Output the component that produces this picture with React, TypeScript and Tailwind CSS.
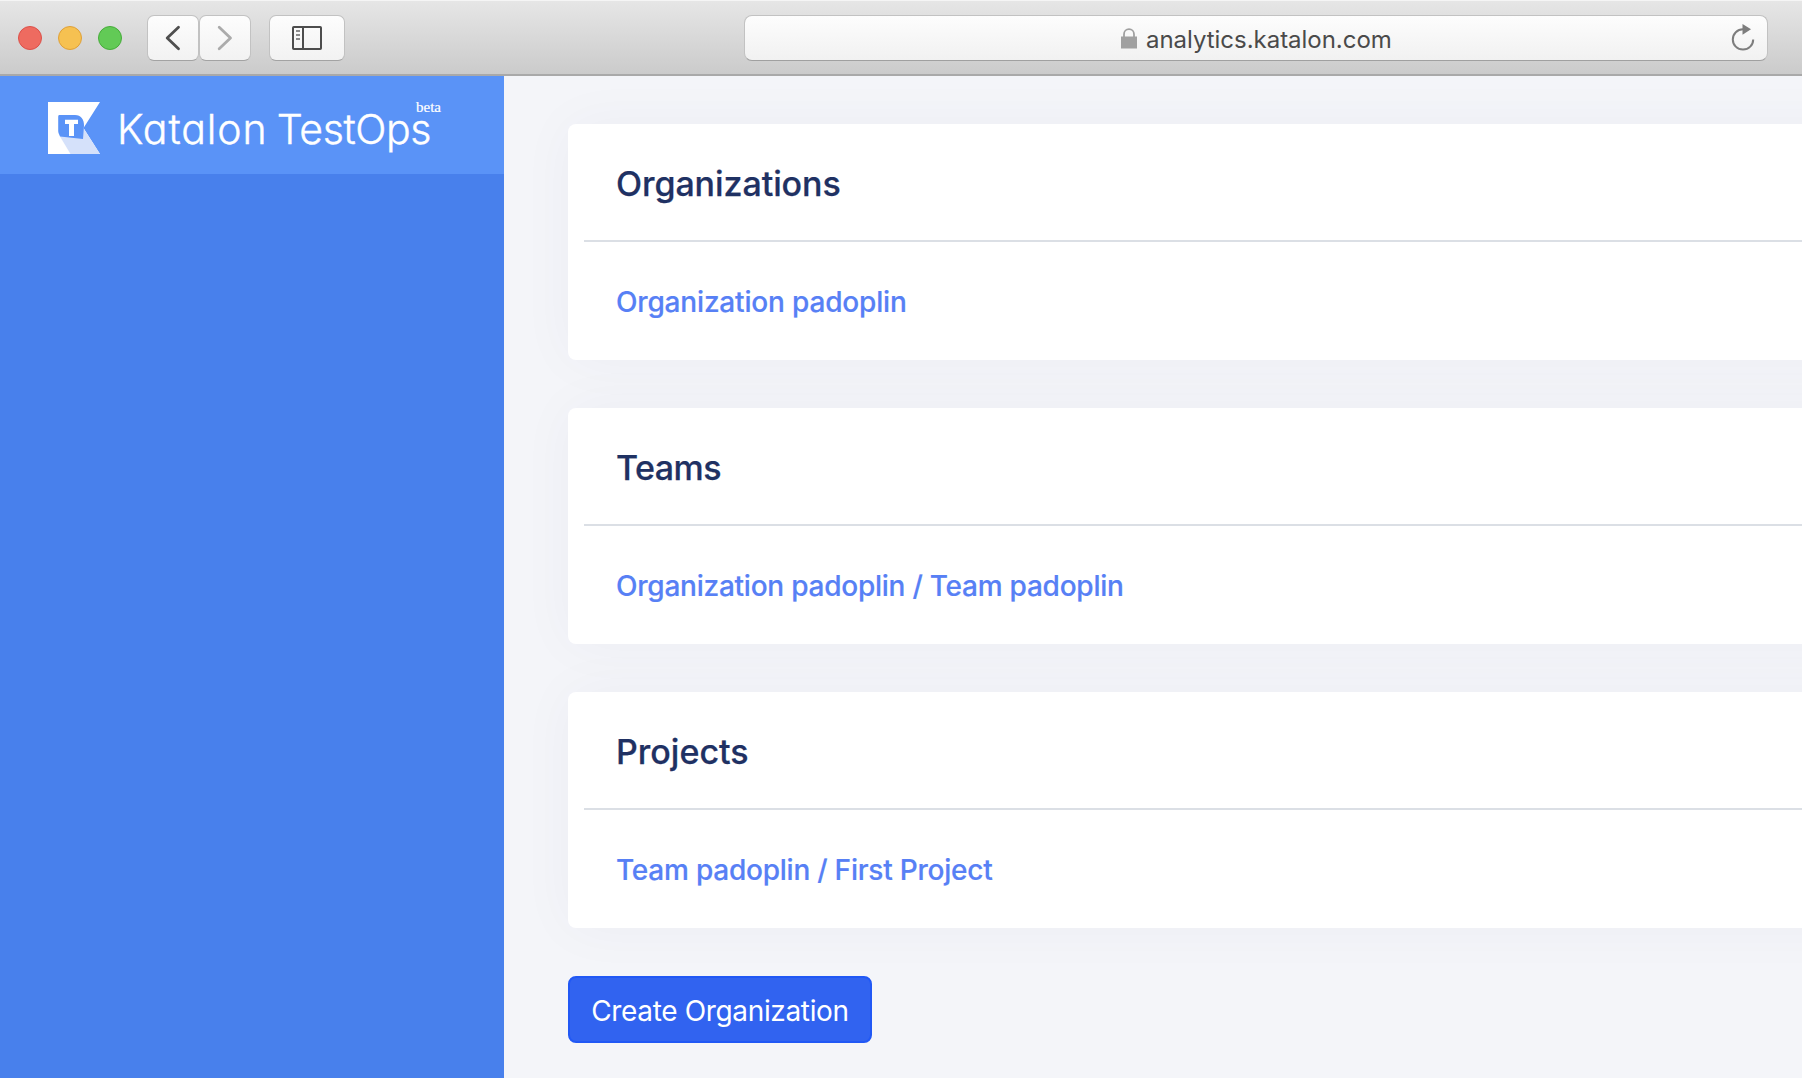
type CardProps = { title: string; titleClass: string; link: string; linkClass: string };

function Card({ title, titleClass, link, linkClass }: CardProps) {
  return (
    <section className="-mr-16 h-[236px] rounded-lg bg-white pl-4 shadow-[0_0_56px_rgba(31,45,90,0.04)]">
      <h2 className={`flex h-[118px] items-center border-b-2 border-[#dbdfe5] pt-[2px] pl-8 text-[34px] font-medium text-[#1f3163] [-webkit-text-stroke:0.25px_#1f3163] ${titleClass}`}>
        {title}
      </h2>
      <div className="flex h-[118px] items-center pt-[2px] pl-8">
        <a href="#" className={`text-[28px] font-medium text-[#5780f5] [-webkit-text-stroke:0.2px_#5780f5] ${linkClass}`}>{link}</a>
      </div>
    </section>
  );
}

const toolButton =
  "flex h-[46px] items-center justify-center rounded-[7px] border border-[#c2c2c2] border-b-[#a3a3a3] bg-gradient-to-b from-[#fdfdfd] to-[#f2f2f2]";

function Toolbar() {
  return (
    <header className="flex h-[76px] shrink-0 items-start border-t border-b-2 border-t-[#f5f5f5] border-b-[#a9a9a9] bg-gradient-to-b from-[#e6e6e6] to-[#cbcbcb] pt-[14px] pl-[18px]">
      <div className="mt-[11px] flex gap-4">
        <span className="size-6 rounded-full border border-[#dc5049] bg-[#ee6b60]" />
        <span className="size-6 rounded-full border border-[#dfa038] bg-[#f6c151]" />
        <span className="size-6 rounded-full border border-[#46ac3a] bg-[#62ca56]" />
      </div>
      <div className="ml-[25px] flex">
        <button className={`${toolButton} w-[52px]`}>
          <svg width="18" height="26" viewBox="0 0 18 26" fill="none" stroke="#4f4f4f" strokeWidth="2.8" strokeLinecap="round" strokeLinejoin="round">
            <path d="M14.5 2.2 3.2 13 14.5 23.8" />
          </svg>
        </button>
        <button className={`${toolButton} w-[52px]`}>
          <svg width="18" height="26" viewBox="0 0 18 26" fill="none" stroke="#ababab" strokeWidth="2.8" strokeLinecap="round" strokeLinejoin="round">
            <path d="M3.2 2.2 14.5 13 3.2 23.8" />
          </svg>
        </button>
      </div>
      <button className={`${toolButton} ml-[18px] w-[76px]`}>
        <svg width="30" height="24" viewBox="0 0 30 24" fill="none" stroke="#4d4d4d" strokeWidth="2">
          <rect x="1" y="1" width="28" height="22" rx="0.8" />
          <path d="M11 1V23" />
          <path d="M4 5H8M4 9H8M4 13H8" stroke="#8c8c8c" />
        </svg>
      </button>
      <div className="ml-[399px] flex h-[46px] w-[1024px] items-center rounded-[8px] border border-[#c2c2c2] border-b-[#a0a0a0] bg-gradient-to-b from-[#fdfdfd] to-[#f1f1f1]">
        <svg className="ml-[376px]" width="16" height="21" viewBox="0 0 16 21" fill="none">
          <rect x="0" y="8.5" width="16" height="12" fill="#a0a0a0" />
          <path d="M3 9V6.2a5 5 0 0 1 10 0V9" stroke="#a0a0a0" strokeWidth="1.8" />
        </svg>
        <span className="ml-[9px] pt-[3px] text-[24px] leading-none tracking-[-0.03px] text-[#4a4a4a]">analytics.katalon.com</span>
        <svg className="mr-3 ml-auto" width="24" height="28" viewBox="0 0 24 28" fill="none">
          <path d="M12 5.2A10.2 10.2 0 1 0 22.2 15.4" stroke="#7d7d7d" strokeWidth="2" />
          <path d="M11.5 0 20 5.3 11.5 10.8Z" fill="#7d7d7d" />
        </svg>
      </div>
    </header>
  );
}

function Brand() {
  return (
    <div className="flex h-[98px] items-start bg-[#5a93f7] pt-[26px] pl-12">
      <svg className="shrink-0" width="52" height="52" viewBox="0 0 52 52">
        <path d="M0 0H52L35.5 26 52 52H0Z" fill="#fff" />
        <path d="M12 34.5 36 27 52 52H22.5Z" fill="#d5e1fa" />
        <path d="M11.5 13H27C33 13 36 17.5 36 23.5L35 37 12 34.5C11 32 10.2 31 10.2 29V15C10.2 13.6 10.6 13 11.5 13Z" fill="#5a93f7" />
        <path d="M17 17.8H30V22H26V34H21V22H17Z" fill="#fff" />
      </svg>
      <div className="flex w-[331px] shrink-0 pt-px pl-[17px] text-[41px] leading-[52px] font-light text-white [-webkit-text-stroke:0.4px_#fff] [font-feature-settings:'cv11']">
        <span className="w-[161px] tracking-[0.9px]">Katalon</span>
        <span className="tracking-[-0.4px]">TestOps</span>
      </div>
      <span className="-ml-[15px] -mt-[2px] font-['Liberation_Serif',serif] text-[15px] leading-[15px] text-white [-webkit-text-stroke:0.2px_#fff]">beta</span>
    </div>
  );
}

export default function App() {
  return (
    <div className="flex h-[1078px] w-[1802px] flex-col overflow-hidden font-['Inter',sans-serif]">
      <Toolbar />
      <div className="flex min-h-0 flex-1">
        <aside className="w-[504px] shrink-0 bg-[#4880ec]">
          <Brand />
        </aside>
        <main className="flex flex-1 flex-col gap-12 overflow-hidden bg-[#f4f5f9] pt-12 pl-16">
          <Card title="Organizations" titleClass="tracking-[-0.08px]" link="Organization padoplin" linkClass="tracking-[-0.17px]" />
          <Card title="Teams" titleClass="tracking-[-0.55px]" link="Organization padoplin / Team padoplin" linkClass="tracking-[-0.24px]" />
          <Card title="Projects" titleClass="tracking-normal" link="Team padoplin / First Project" linkClass="tracking-[-0.23px]" />
          <button className="h-[67px] w-[304px] rounded-lg border-2 border-[#2158f5] bg-[#3163f0] pt-[2px] text-[28px] tracking-[-0.35px] whitespace-nowrap text-white">
            Create Organization
          </button>
        </main>
      </div>
    </div>
  );
}
